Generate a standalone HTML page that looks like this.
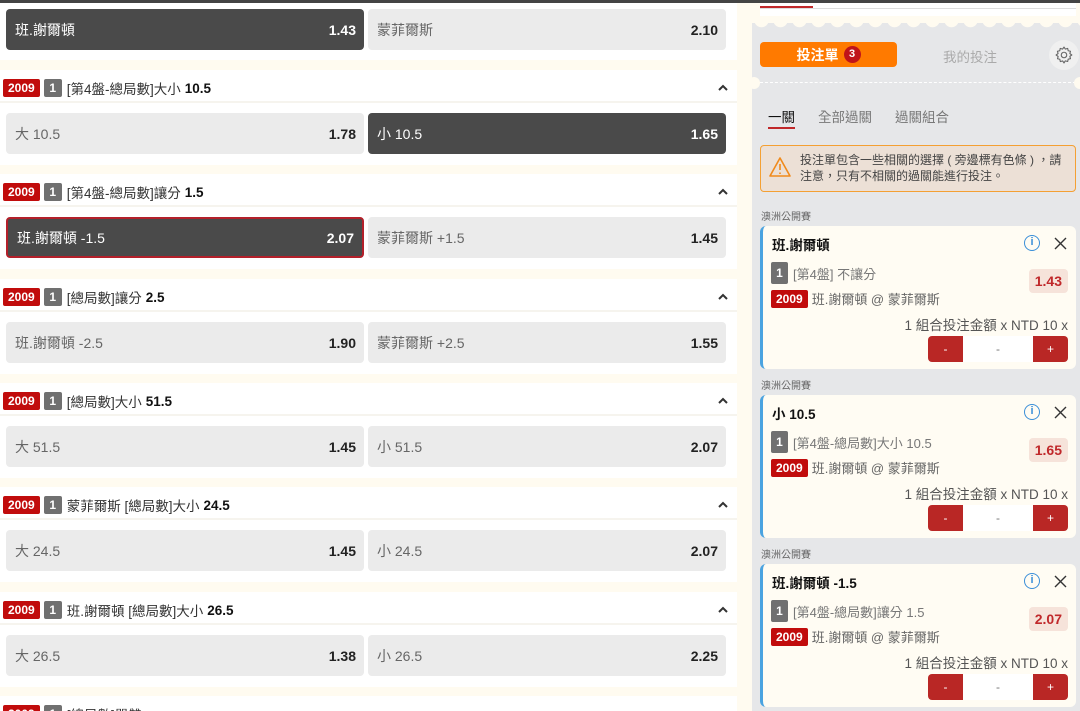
<!DOCTYPE html>
<html style="width:1080px;height:711px;overflow:hidden"><head><meta charset="utf-8"><style>
*{box-sizing:border-box;margin:0;padding:0}
body{width:1080px;height:711px;overflow:hidden;background:#fffbf0;font-family:"Liberation Sans","Noto Sans CJK TC",sans-serif;position:relative;color:#222}
.abs{position:absolute}
.topbar{left:0;top:0;width:1080px;height:3px;background:#444}
.white{background:#fff;left:0;width:737px}
.btn{position:absolute;height:41px;border-radius:4px;background:#ebebeb;font-size:14px;color:#666;display:flex;align-items:center;justify-content:space-between;padding:0 8px 0 9px}
.btn b{color:#222;font-weight:bold;font-size:14px}
.btn.sel{background:#4a4a4a;color:#fff}
.btn.sel b{color:#fff}
.btn.red{border:2px solid #b3202a}
.hdr{position:absolute;left:3px;height:20px;display:flex;align-items:center;font-size:13.5px;color:#333}
.y{background:#c10c0c;color:#fff;font-weight:bold;font-size:12px;padding:0 5px;height:18px;line-height:18px;border-radius:2px;margin-right:4px}
.n{background:#707070;color:#fff;font-weight:bold;font-size:12px;width:18px;height:18px;line-height:18px;text-align:center;border-radius:2px;margin-right:5px}
.hdr b{color:#111;margin-left:4px}
.caret{position:absolute;left:718px}
.line{position:absolute;left:0;width:737px;height:2px;background:#f6f4ee}
.panel{left:752px;top:3px;width:328px;height:708px;background:#e6e7e9}
.card{position:absolute;left:760px;width:316px;height:143px;background:#fffcf3;border-radius:6px;border-left:3px solid #4aa3e0}
.lg{position:absolute;left:761px;font-size:10px;color:#666}
.ct{position:absolute;left:9px;top:8px;font-size:13.5px;font-weight:bold;color:#111}
.l1{position:absolute;left:8px;top:36px;display:flex;align-items:center;font-size:13px;color:#777}
.l1 .n{width:17px;height:22px;line-height:22px}
.l2{position:absolute;left:8px;top:63px;display:flex;align-items:center;font-size:13px;color:#666}
.odd{position:absolute;right:8px;top:43px;background:#f6e3da;color:#c0282a;font-size:14px;font-weight:bold;padding:4px 6px;border-radius:4px}
.amt{position:absolute;right:8px;top:88px;font-size:13.5px;color:#555}
.step{position:absolute;right:8px;top:110px;width:140px;height:26px;border-radius:4px;background:#b92725;display:flex;font-size:12px;color:#fff}
.step span{width:35px;text-align:center;line-height:26px}
.step i{flex:1;background:#fff;color:#777;text-align:center;line-height:26px;font-style:normal}
.info{position:absolute;right:36px;top:9px;width:16px;height:16px;border:1.5px solid #3b8fd8;border-radius:50%;color:#3b8fd8;font-size:11px;font-weight:bold;text-align:center;line-height:13px}
.x{position:absolute;right:9px;top:11px}
</style></head><body>
<div class="abs white" style="top:0;height:60px"></div>
<div class="abs topbar"></div>
<div class="btn sel" style="left:6px;top:9px;width:358px"><span>班.謝爾頓</span><b>1.43</b></div>
<div class="btn" style="left:368px;top:9px;width:358px"><span>蒙菲爾斯</span><b>2.10</b></div>

<div class="abs white" style="top:70px;height:95px"></div>
<div class="line" style="top:101px"></div>
<div class="hdr" style="top:78px"><span class="y">2009</span><span class="n">1</span>[第4盤-總局數]大小<b>10.5</b></div><svg class="caret" style="top:84px" width="10" height="7"><path d="M1 6L5 2L9 6" fill="none" stroke="#333" stroke-width="2"/></svg>
<div class="btn" style="left:6px;top:113px;width:358px"><span>大 10.5</span><b>1.78</b></div>
<div class="btn sel" style="left:368px;top:113px;width:358px"><span>小 10.5</span><b>1.65</b></div>

<div class="abs white" style="top:174px;height:95px"></div>
<div class="line" style="top:205px"></div>
<div class="hdr" style="top:182px"><span class="y">2009</span><span class="n">1</span>[第4盤-總局數]讓分<b>1.5</b></div><svg class="caret" style="top:188px" width="10" height="7"><path d="M1 6L5 2L9 6" fill="none" stroke="#333" stroke-width="2"/></svg>
<div class="btn sel red" style="left:6px;top:217px;width:358px"><span>班.謝爾頓 -1.5</span><b>2.07</b></div>
<div class="btn" style="left:368px;top:217px;width:358px"><span>蒙菲爾斯 +1.5</span><b>1.45</b></div>

<div class="abs white" style="top:279px;height:95px"></div>
<div class="line" style="top:310px"></div>
<div class="hdr" style="top:287px"><span class="y">2009</span><span class="n">1</span>[總局數]讓分<b>2.5</b></div><svg class="caret" style="top:293px" width="10" height="7"><path d="M1 6L5 2L9 6" fill="none" stroke="#333" stroke-width="2"/></svg>
<div class="btn" style="left:6px;top:322px;width:358px"><span>班.謝爾頓 -2.5</span><b>1.90</b></div>
<div class="btn" style="left:368px;top:322px;width:358px"><span>蒙菲爾斯 +2.5</span><b>1.55</b></div>

<div class="abs white" style="top:383px;height:95px"></div>
<div class="line" style="top:414px"></div>
<div class="hdr" style="top:391px"><span class="y">2009</span><span class="n">1</span>[總局數]大小<b>51.5</b></div><svg class="caret" style="top:397px" width="10" height="7"><path d="M1 6L5 2L9 6" fill="none" stroke="#333" stroke-width="2"/></svg>
<div class="btn" style="left:6px;top:426px;width:358px"><span>大 51.5</span><b>1.45</b></div>
<div class="btn" style="left:368px;top:426px;width:358px"><span>小 51.5</span><b>2.07</b></div>

<div class="abs white" style="top:487px;height:95px"></div>
<div class="line" style="top:518px"></div>
<div class="hdr" style="top:495px"><span class="y">2009</span><span class="n">1</span>蒙菲爾斯 [總局數]大小<b>24.5</b></div><svg class="caret" style="top:501px" width="10" height="7"><path d="M1 6L5 2L9 6" fill="none" stroke="#333" stroke-width="2"/></svg>
<div class="btn" style="left:6px;top:530px;width:358px"><span>大 24.5</span><b>1.45</b></div>
<div class="btn" style="left:368px;top:530px;width:358px"><span>小 24.5</span><b>2.07</b></div>

<div class="abs white" style="top:592px;height:95px"></div>
<div class="line" style="top:623px"></div>
<div class="hdr" style="top:600px"><span class="y">2009</span><span class="n">1</span>班.謝爾頓 [總局數]大小<b>26.5</b></div><svg class="caret" style="top:606px" width="10" height="7"><path d="M1 6L5 2L9 6" fill="none" stroke="#333" stroke-width="2"/></svg>
<div class="btn" style="left:6px;top:635px;width:358px"><span>大 26.5</span><b>1.38</b></div>
<div class="btn" style="left:368px;top:635px;width:358px"><span>小 26.5</span><b>2.25</b></div>

<div class="abs white" style="top:696px;height:20px"></div>
<div class="hdr" style="top:704px"><span class="y">2009</span><span class="n">1</span>[總局數]單雙</div>

<!-- right panel -->
<div class="abs panel"></div>
<div class="abs" style="left:752px;top:3px;width:328px;height:20px;background:#fffbf0"></div>
<div class="abs" style="left:760px;top:3px;width:316px;height:13px;background:#fff"></div>
<div class="abs" style="left:760px;top:8px;width:316px;height:1px;background:#ddd"></div>
<div class="abs" style="left:760px;top:6px;width:53px;height:2px;background:#c0282a"></div>
<div class="abs" style="left:752px;top:20px;width:328px;height:12px;background:radial-gradient(circle at 9.5px 0,#fffbf0 7px,transparent 7.5px) 0 0/19px 12px repeat-x"></div>
<div class="abs" style="left:760px;top:42px;width:137px;height:25px;background:#ff7a00;border-radius:4px;color:#fff;font-size:14px;font-weight:bold;display:flex;align-items:center;justify-content:center">投注單<span style="display:inline-block;width:17px;height:17px;border-radius:50%;background:#c0141a;font-size:11px;line-height:17px;text-align:center;margin-left:5px">3</span></div>
<div class="abs" style="left:943px;top:46px;font-size:13.5px;color:#aaa">我的投注</div>
<div class="abs" style="left:1049px;top:40px;width:30px;height:30px;border-radius:50%;background:#f0f0f0"></div>
<svg class="abs" style="left:1054px;top:45px" width="20" height="20" viewBox="0 0 24 24"><path d="M12 2.5l1.6 2.4 2.8-.8.6 2.8 2.8.6-.8 2.8 2.4 1.7-2.4 1.6.8 2.8-2.8.6-.6 2.8-2.8-.8L12 21.5l-1.6-2.4-2.8.8-.6-2.8-2.8-.6.8-2.8L2.5 12l2.4-1.7-.8-2.8 2.8-.6.6-2.8 2.8.8z" fill="none" stroke="#666" stroke-width="1.3" stroke-linejoin="round"/><circle cx="12" cy="12" r="3.3" fill="none" stroke="#666" stroke-width="1.3"/></svg>
<div class="abs" style="left:760px;top:82px;width:316px;border-top:1.5px dashed #fff"></div>
<div class="abs" style="left:748px;top:77px;width:12px;height:12px;border-radius:50%;background:#fffbf0"></div>
<div class="abs" style="left:1074px;top:77px;width:12px;height:12px;border-radius:50%;background:#fffbf0"></div>
<div class="abs" style="left:768px;top:106px;font-size:13.5px;color:#111">一關</div>
<div class="abs" style="left:768px;top:127px;width:27px;height:2px;background:#c0282a"></div>
<div class="abs" style="left:818px;top:106px;font-size:13.5px;color:#777">全部過關</div>
<div class="abs" style="left:895px;top:106px;font-size:13.5px;color:#777">過關組合</div>
<div class="abs" style="left:760px;top:145px;width:316px;height:47px;background:#ece0d6;border:1px solid #f4a033;border-radius:4px"></div>
<svg class="abs" style="left:768px;top:156px" width="24" height="22" viewBox="0 0 24 22"><path d="M12 2 L22 20 H2 Z" fill="none" stroke="#f08a1c" stroke-width="1.6" stroke-linejoin="round"/><path d="M12 8v6M12 16.5v1.5" stroke="#f08a1c" stroke-width="1.6"/></svg>
<div class="abs" style="left:800px;top:152px;width:262px;font-size:12px;line-height:16px;color:#444">投注單包含一些相關的選擇 ( 旁邊標有色條 ) ，請注意，只有不相關的過關能進行投注。</div>

<div class="lg" style="top:208px">澳洲公開賽</div>
<div class="card" style="top:226px"><div class="ct">班.謝爾頓</div><div class="info">i</div><svg class="x" width="13" height="13"><path d="M1 1L12 12M12 1L1 12" stroke="#333" stroke-width="1.4"/></svg>
<div class="l1"><span class="n">1</span>[第4盤] 不讓分</div><div class="l2"><span class="y">2009</span>班.謝爾頓 @ 蒙菲爾斯</div>
<div class="odd">1.43</div><div class="amt">1 組合投注金額 x NTD 10 x</div><div class="step"><span>-</span><i>-</i><span>+</span></div></div>

<div class="lg" style="top:377px">澳洲公開賽</div>
<div class="card" style="top:395px"><div class="ct">小 10.5</div><div class="info">i</div><svg class="x" width="13" height="13"><path d="M1 1L12 12M12 1L1 12" stroke="#333" stroke-width="1.4"/></svg>
<div class="l1"><span class="n">1</span>[第4盤-總局數]大小 10.5</div><div class="l2"><span class="y">2009</span>班.謝爾頓 @ 蒙菲爾斯</div>
<div class="odd">1.65</div><div class="amt">1 組合投注金額 x NTD 10 x</div><div class="step"><span>-</span><i>-</i><span>+</span></div></div>

<div class="lg" style="top:546px">澳洲公開賽</div>
<div class="card" style="top:564px"><div class="ct">班.謝爾頓 -1.5</div><div class="info">i</div><svg class="x" width="13" height="13"><path d="M1 1L12 12M12 1L1 12" stroke="#333" stroke-width="1.4"/></svg>
<div class="l1"><span class="n">1</span>[第4盤-總局數]讓分 1.5</div><div class="l2"><span class="y">2009</span>班.謝爾頓 @ 蒙菲爾斯</div>
<div class="odd">2.07</div><div class="amt">1 組合投注金額 x NTD 10 x</div><div class="step"><span>-</span><i>-</i><span>+</span></div></div>
</body></html>
